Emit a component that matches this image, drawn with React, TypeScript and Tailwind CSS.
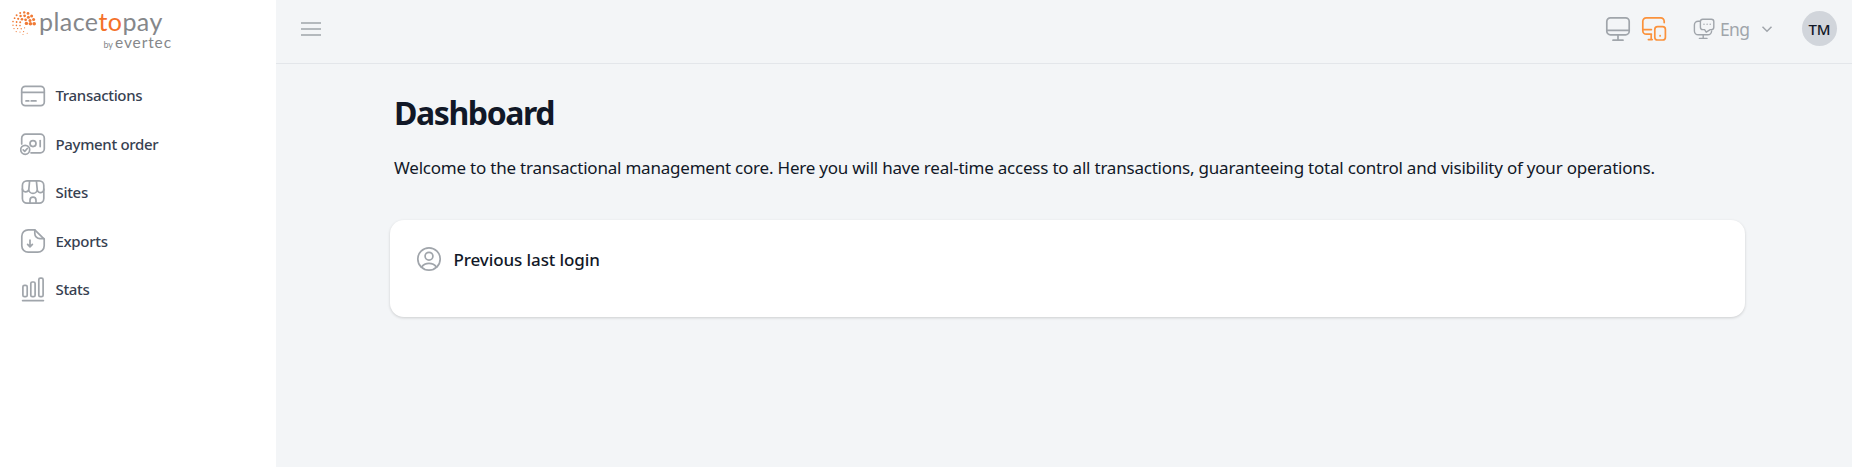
import React from "react";

const icon = {
  width: 26,
  height: 26,
  viewBox: "0 0 26 26",
  fill: "none",
  stroke: "currentColor",
  strokeWidth: 1.7,
  strokeLinecap: "round" as const,
  strokeLinejoin: "round" as const,
};

const CardIcon = () => (
  <svg {...icon}>
    <rect x="1.7" y="3.4" width="22.6" height="19.2" rx="3.6" />
    <path d="M1.7 9.3h22.6M6 17.9h2.8M11.2 17.9h4.8" />
  </svg>
);

const OrderIcon = () => (
  <svg {...icon}>
    <path d="M1.7 13V7.2a4 4 0 0 1 4-4h14.6a4 4 0 0 1 4 4v10.6a4 4 0 0 1-4 4H11" />
    <circle cx="13" cy="12.6" r="3" />
    <path d="M20.2 9.6v6" />
    <circle cx="5.2" cy="18.8" r="4.5" />
    <path d="m3.2 18.9 1.5 1.5 2.6-2.9" />
  </svg>
);

const SitesIcon = () => (
  <svg {...icon}>
    <rect x="2.4" y="1.8" width="21.4" height="22.4" rx="4.6" />
    <path d="M2.4 10a3.3 3.3 0 0 0 6.400.6L9.600 2M8.800 10.200a4.200 4.200 0 0 0 8.400 0L16.400 2M17.200 10.600a3.300 3.300 0 0 0 6.600-.6M10 24v-2.8a3 3 0 0 1 6 0V24" />
  </svg>
);

const ExportIcon = () => (
  <svg {...icon}>
    <path d="M14.8 1.8H8.2a6.4 6.4 0 0 0-6.4 6.4v9.6a6.4 6.4 0 0 0 6.4 6.4h9.6a6.4 6.4 0 0 0 6.4-6.4v-6.6z" />
    <path d="M14.8 1.8v3.6a5.2 5.2 0 0 0 5.2 5.2h4M10 12v6.6M7.6 16.4l2.4 2.4 2.4-2.4" />
  </svg>
);

const StatsIcon = () => (
  <svg {...icon}>
    <rect x="2.9" y="9.3" width="4.3" height="11.4" rx="1.5" />
    <rect x="10.8" y="6" width="4.3" height="14.7" rx="1.5" />
    <rect x="18.8" y="2.2" width="4.3" height="18.5" rx="1.5" />
    <path d="M2.6 24.6h20.8" />
  </svg>
);

const dots: [number, number, number][] = [
  [8.6, 1.8, 1], [12.6, 1.2, 1.2], [16.4, 2.2, 1.4], [5, 4, 1], [9, 4.8, 1.2], [13, 4.6, 1.4], [16.8, 6, 1.5], [20, 4.8, 1.5],
  [3, 7, 0.9], [6.6, 7.6, 1.1], [10.4, 8, 1.3], [14, 8.6, 1.4], [22, 8.4, 1.5], [1.4, 10.4, 0.8], [5, 10.8, 0.9],
  [8.6, 11, 1], [18.4, 9.4, 1.5], [14.8, 12.2, 1.7], [18.8, 12.6, 1.8], [22.6, 12.6, 1.8], [1.4, 14, 0.7], [4.8, 14.2, 0.8],
  [8.4, 14.4, 0.8], [2.4, 17.4, 0.7], [6, 17.4, 0.7], [9.6, 17.6, 0.7], [13, 16.6, 0.6], [4.6, 20.4, 0.6], [8.4, 20.8, 0.6],
  [12, 20.4, 0.6], [11.4, 23.2, 0.5], [15.6, 22, 0.5],
];

const Logo = () => (
  <div className="flex h-[52px] pl-[11px] pt-[11px]">
    <svg width="26" height="25" viewBox="0 0 26 25" fill="#f07a35">
      {dots.map(([x, y, r], i) => (
        <circle key={i} cx={x + 0.6} cy={y + 0.2} r={r} />
      ))}
    </svg>
    <div className="ml-[2px] w-[133px] font-['Lato',sans-serif] text-[#85878a]">
      <div className="-mt-[3px] h-[26px] whitespace-nowrap text-[25px] leading-[26px] tracking-[0.45px]">
        place<span className="text-[#f4712a]">to</span>pay
      </div>
      <div className="flex h-4 items-baseline justify-end whitespace-nowrap leading-4">
        <span className="mr-[2px] text-[9px] leading-[10px]">by</span>
        <span className="text-[15.5px] leading-4 tracking-[0.9px]">evertec</span>
      </div>
    </div>
  </div>
);

const items = [
  { label: "Transactions", Icon: CardIcon },
  { label: "Payment order", Icon: OrderIcon },
  { label: "Sites", Icon: SitesIcon },
  { label: "Exports", Icon: ExportIcon },
  { label: "Stats", Icon: StatsIcon },
];

export default function App() {
  return (
    <div className="flex h-[467px] w-[1852px] overflow-hidden bg-[#f3f5f7] font-['Noto_Sans',sans-serif]">
      <aside className="flex w-[276px] shrink-0 flex-col bg-white">
        <Logo />
        <nav className="mt-[19.4px] flex flex-col">
          {items.map(({ label, Icon }) => (
            <a key={label} className="flex h-[48.4px] items-center gap-[9.5px] pl-5 text-[#a0a5ab]">
              <Icon />
              <span className="text-[15px] font-medium tracking-[-0.32px] text-[#374151]">{label}</span>
            </a>
          ))}
        </nav>
      </aside>

      <div className="flex grow flex-col">
        <header className="flex h-16 shrink-0 items-center border-b border-[#e3e6ea] pb-[6px] pl-[25px] pr-[15px] text-[#a0a5ab]">
          <svg width="20" height="16" viewBox="0 0 20 16" stroke="currentColor" strokeWidth="1.7">
            <path d="M0 2h20M0 8h20M0 14h20" />
          </svg>
          <div className="ml-auto flex items-center">
            <svg {...icon}>
              <rect x="1.8" y="1.8" width="22.4" height="17" rx="3.6" />
              <path d="M1.8 14.4h22.4M13 18.8v5.4M8 24.2h10" />
            </svg>
            <svg {...icon} className="ml-[10px] text-[#fb923c]">
              <path d="M23.2 6.6V5.2a3.4 3.4 0 0 0-3.4-3.4H5.2a3.4 3.4 0 0 0-3.4 3.4v9.6a3.4 3.4 0 0 0 3.4 3.4h5.2M1.8 13.6h8.6M7.4 23.6h3.8M10.2 18.4v5.2" />
              <rect x="13.8" y="10.6" width="10.6" height="13.4" rx="2.8" />
              <path d="M19.1 19.6v.3" />
            </svg>
            <svg width="22" height="22" viewBox="0 0 22 22" fill="none" stroke="currentColor" strokeWidth="1.4" strokeLinecap="round" strokeLinejoin="round" className="ml-[26px]">
              <path d="M7.4 3.2H5.2A3.8 3.8 0 0 0 1.4 7v6a3.8 3.8 0 0 0 3.8 3.8h9.6a3.8 3.8 0 0 0 3.8-3.8M10.2 16.8v3.6M6.4 20.4h7.6" />
              <path d="M9.8 1.2h8.6a2.4 2.4 0 0 1 2.4 2.4v5.6a2.4 2.4 0 0 1-2.4 2.4h-1.2l-4 2.6-1.6-2.6H9.8a2.4 2.4 0 0 1-2.4-2.4V3.6a2.4 2.4 0 0 1 2.4-2.4zM11 6.2v.1M14.1 6.2v.1M17.2 6.2v.1" />
            </svg>
            <span className="ml-[5px] w-[29px] pt-[2px] text-[17.5px] tracking-[-0.7px]">Eng</span>
            <svg width="12" height="8" viewBox="0 0 12 8" fill="none" stroke="currentColor" strokeWidth="1.5" className="ml-[12px]">
              <path d="m1.5 1.7 4.5 4.5 4.5-4.5" />
            </svg>
            <div className="ml-[29px] flex size-[35px] items-center justify-center rounded-full bg-[#d1d5db] pt-px text-[15px] font-medium text-[#111827]">
              TM
            </div>
          </div>
        </header>

        <main className="flex flex-col pl-[114px] pr-[107px] text-[#111827]">
          <h1 className="mt-[29px] h-10 pl-1 text-[32px] font-bold leading-10 tracking-[-1.4px]">Dashboard</h1>
          <p className="mt-[21px] h-7 whitespace-nowrap pl-1 text-[17px] leading-7 tracking-[-0.215px]">
            Welcome to the transactional management core. Here you will have real-time access to all transactions, guaranteeing total control and visibility of your operations.
          </p>
          <section className="mt-[38px] flex h-[97px] items-start rounded-[14px] bg-white pl-[26px] pt-[26px] shadow-[0_1px_3px_rgba(0,0,0,0.16)]">
            <svg {...icon} className="text-[#a0a5ab]">
              <circle cx="13" cy="13" r="11.2" />
              <circle cx="13" cy="10.2" r="3.9" />
              <path d="M5.4 21.2a9.5 9.5 0 0 1 15.2 0" />
            </svg>
            <h2 className="ml-[11.5px] text-[17px] font-medium leading-[27px] tracking-[-0.1px]">Previous last login</h2>
          </section>
        </main>
      </div>
    </div>
  );
}
